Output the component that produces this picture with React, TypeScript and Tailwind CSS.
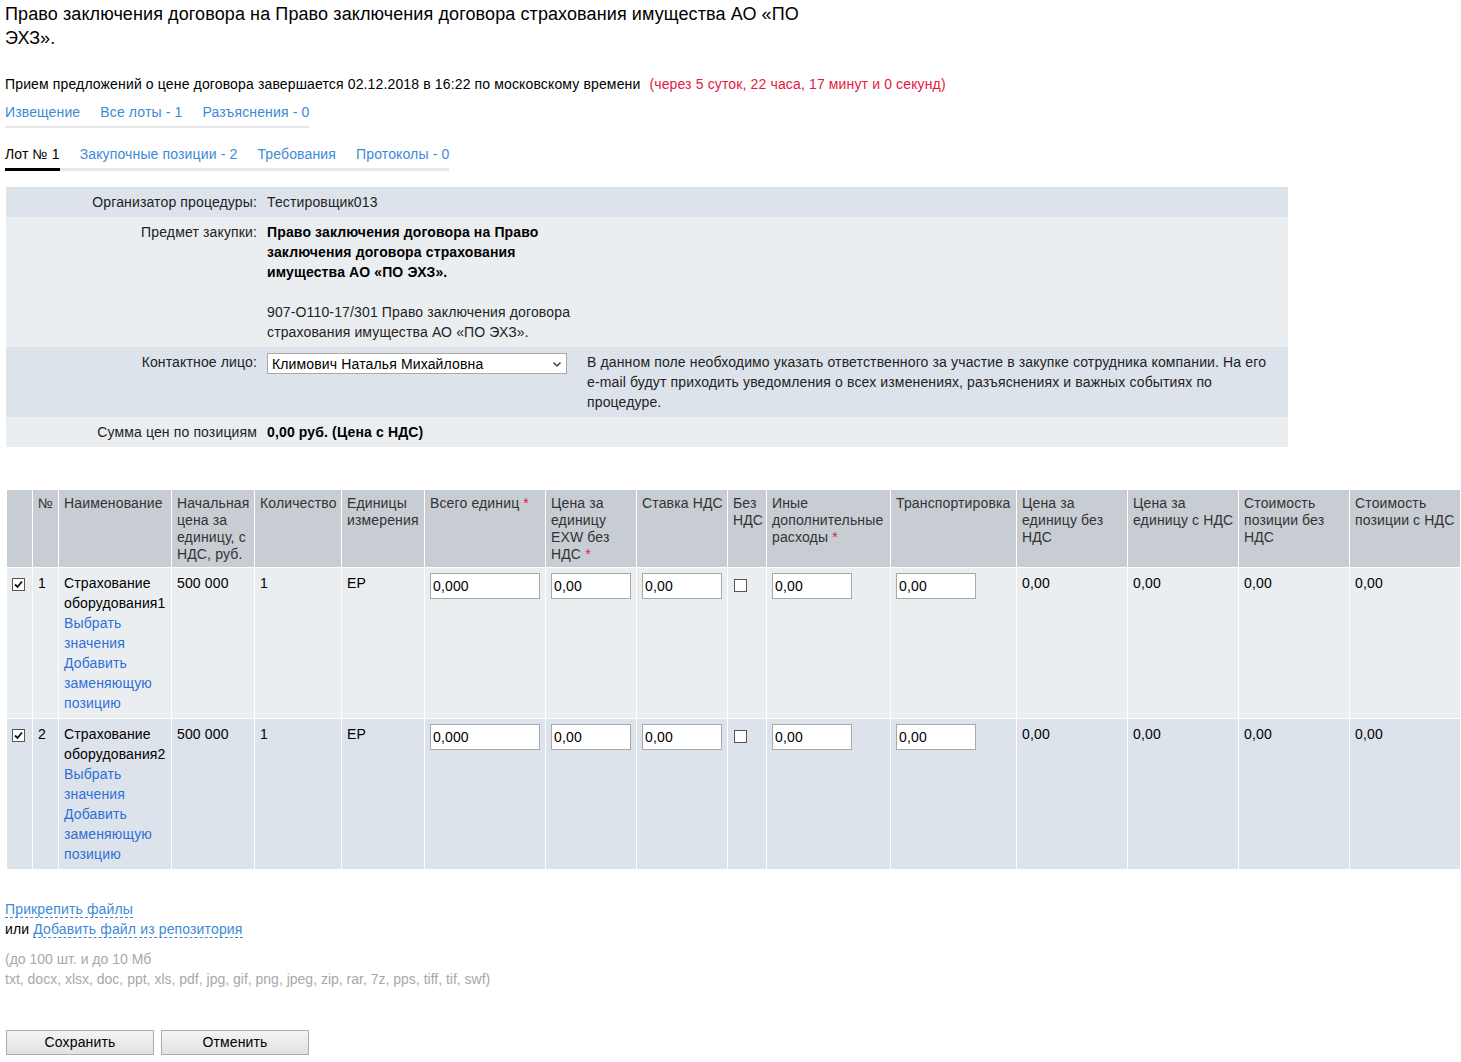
import React from "react";

const Check = ({ checked }: { checked: boolean }) => (
  <span className="flex h-[13px] w-[13px] items-center justify-center border border-[#555] bg-white">
    {checked && (
      <svg width="9" height="9" viewBox="0 0 9 9">
        <path d="M1 4.5 L3.5 7 L8 1.5" fill="none" stroke="#111" strokeWidth="1.8" />
      </svg>
    )}
  </span>
);

const Input = ({ v, w }: { v: string; w: string }) => (
  <div className={`${w} h-[26px] border border-[#a9a9a9] bg-white pl-[2px] leading-[24px]`}>{v}</div>
);

const Req = () => <span className="text-[#e5173f]">*</span>;

const headers: React.ReactNode[] = [
  "",
  "№",
  "Наименование",
  "Начальная цена за единицу, с НДС, руб.",
  "Количество",
  "Единицы измерения",
  <>Всего единиц <Req /></>,
  <>Цена за единицу EXW без НДС <Req /></>,
  "Ставка НДС",
  "Без НДС",
  <>Иные дополнительные расходы <Req /></>,
  "Транспортировка",
  "Цена за единицу без НДС",
  "Цена за единицу с НДС",
  "Стоимость позиции без НДС",
  "Стоимость позиции с НДС",
];

const widths = [26, 26, 113, 83, 87, 83, 121, 91, 91, 39, 124, 126, 111, 111, 111, 111];

function Row({ n, bg }: { n: number; bg: string }) {
  const td = "border border-white align-top pl-[5px] pr-px py-[5px]";
  return (
    <tr className={bg}>
      <td className={td}>
        <div className="mt-[5px]">
          <Check checked />
        </div>
      </td>
      <td className={td}>{n}</td>
      <td className={td}>
        <div>Страхование оборудования{n}</div>
        <div className="text-[#2e6fd6]">Выбрать значения</div>
        <div className="text-[#2e6fd6]">Добавить заменяющую позицию</div>
      </td>
      <td className={td}>500 000</td>
      <td className={td}>1</td>
      <td className={td}>ЕР</td>
      <td className={td}>
        <Input v="0,000" w="w-[110px]" />
      </td>
      <td className={td}>
        <Input v="0,00" w="w-[80px]" />
      </td>
      <td className={td}>
        <Input v="0,00" w="w-[80px]" />
      </td>
      <td className={td}>
        <div className="mt-[6px] ml-[1px]">
          <Check checked={false} />
        </div>
      </td>
      <td className={td}>
        <Input v="0,00" w="w-[80px]" />
      </td>
      <td className={td}>
        <Input v="0,00" w="w-[80px]" />
      </td>
      <td className={td}>0,00</td>
      <td className={td}>0,00</td>
      <td className={td}>0,00</td>
      <td className={td}>0,00</td>
    </tr>
  );
}

export default function App() {
  return (
    <div
      className="min-h-[1062px] bg-white pl-[5px] text-[14px] leading-[20px] tracking-[0.14px] text-black"
      style={{ fontFamily: '"Liberation Sans", Arial, sans-serif' }}
    >
      <h1 className="w-[820px] pt-[2px] text-[18px] font-normal leading-[24px] tracking-[0.1px]">
        Право заключения договора на Право заключения договора страхования имущества АО «ПО ЭХЗ».
      </h1>

      <div className="mt-[24px]">
        Прием предложений о цене договора завершается 02.12.2018 в 16:22 по московскому времени
        <span className="ml-[9px] text-[#e5173f]">(через 5 суток, 22 часа, 17 минут и 0 секунд)</span>
      </div>

      <div className="mt-[8px] inline-flex gap-[20px] border-b-[2px] border-[#e8e8e8] pb-[4px] text-[#3d8ad6]">
        <span>Извещение</span>
        <span>Все лоты - 1</span>
        <span>Разъяснения - 0</span>
      </div>

      <div>
        <div className="mt-[16px] inline-flex gap-[20px] border-b-[3px] border-[#e8e8e8] text-[#3d8ad6]">
          <span className="-mb-[3px] border-b-[3px] border-black pb-[4px] text-black">Лот № 1</span>
          <span className="pb-[4px]">Закупочные позиции - 2</span>
          <span className="pb-[4px]">Требования</span>
          <span className="pb-[4px]">Протоколы - 0</span>
        </div>
      </div>

      <div className="ml-px mt-[16px] w-[1282px] text-[#222]">
        <div className="grid grid-cols-[256px_320px_1fr] bg-[#dde3ea] py-[5px]">
          <div className="pr-[5px] text-right">Организатор процедуры:</div>
          <div className="pl-[5px]">Тестировщик013</div>
          <div />
        </div>
        <div className="grid grid-cols-[256px_320px_1fr] bg-[#ebeef1] py-[5px]">
          <div className="pr-[5px] text-right">Предмет закупки:</div>
          <div className="pl-[5px] pr-[5px]">
            <div className="font-bold text-black">
              Право заключения договора на Право заключения договора страхования имущества АО «ПО ЭХЗ».
            </div>
            <div className="h-[20px]" />
            <div>907-О110-17/301 Право заключения договора страхования имущества АО «ПО ЭХЗ».</div>
          </div>
          <div />
        </div>
        <div className="grid grid-cols-[256px_320px_1fr] bg-[#dde3ea] py-[5px]">
          <div className="pr-[5px] text-right">Контактное лицо:</div>
          <div className="pl-[5px]">
            <div className="mt-px flex h-[21px] w-[300px] items-center justify-between border border-[#a9a9a9] bg-white pl-[4px] pr-[4px] text-black">
              <span>Климович Наталья Михайловна</span>
              <svg width="10" height="10" viewBox="0 0 10 10">
                <path d="M1.5 3.5 L5 7 L8.5 3.5" fill="none" stroke="#444" strokeWidth="1.5" />
              </svg>
            </div>
          </div>
          <div className="pl-[5px] pr-[14px]">
            В данном поле необходимо указать ответственного за участие в закупке сотрудника компании. На его{" "}
            <span className="whitespace-nowrap">e-mail</span> будут приходить уведомления о всех изменениях,
            разъяснениях и важных событиях по процедуре.
          </div>
        </div>
        <div className="grid grid-cols-[256px_320px_1fr] bg-[#ebeef1] py-[5px]">
          <div className="pr-[5px] text-right">Сумма цен по позициям</div>
          <div className="whitespace-nowrap pl-[5px] font-bold text-black">0,00 руб. (Цена с НДС)</div>
          <div />
        </div>
      </div>

      <table className="ml-px mt-[42px] w-[1454px] table-fixed border-collapse">
        <colgroup>
          {widths.map((w, i) => (
            <col key={i} style={{ width: w }} />
          ))}
        </colgroup>
        <thead>
          <tr className="bg-[#c8ccd3]">
            {headers.map((h, i) => (
              <th
                key={i}
                className="border border-white pb-[4px] pl-[5px] pr-px pt-[5px] text-left align-top font-normal leading-[17px] text-[#333]"
              >
                {h}
              </th>
            ))}
          </tr>
        </thead>
        <tbody>
          <Row n={1} bg="bg-[#ebeef1]" />
          <Row n={2} bg="bg-[#dde3ea]" />
        </tbody>
      </table>

      <div className="mt-[29px]">
        <span className="border-b border-dashed border-[#3d8ad6] text-[#3d8ad6]">Прикрепить файлы</span>
      </div>
      <div>
        или{" "}
        <span className="border-b border-dashed border-[#3d8ad6] text-[#3d8ad6]">Добавить файл из репозитория</span>
      </div>
      <div className="mt-[10px] tracking-normal text-[#a8a8a8]">
        <div>(до 100 шт. и до 10 Мб</div>
        <div>txt, docx, xlsx, doc, ppt, xls, pdf, jpg, gif, png, jpeg, zip, rar, 7z, pps, tiff, tif, swf)</div>
      </div>

      <div className="ml-px mt-[41px] flex gap-[7px]">
        <button className="h-[25px] w-[148px] border border-[#acacac] bg-gradient-to-b from-[#f4f4f4] to-[#e2e2e2] text-[14px] leading-[23px] text-black">
          Сохранить
        </button>
        <button className="h-[25px] w-[148px] border border-[#acacac] bg-gradient-to-b from-[#f4f4f4] to-[#e2e2e2] text-[14px] leading-[23px] text-black">
          Отменить
        </button>
      </div>
    </div>
  );
}
